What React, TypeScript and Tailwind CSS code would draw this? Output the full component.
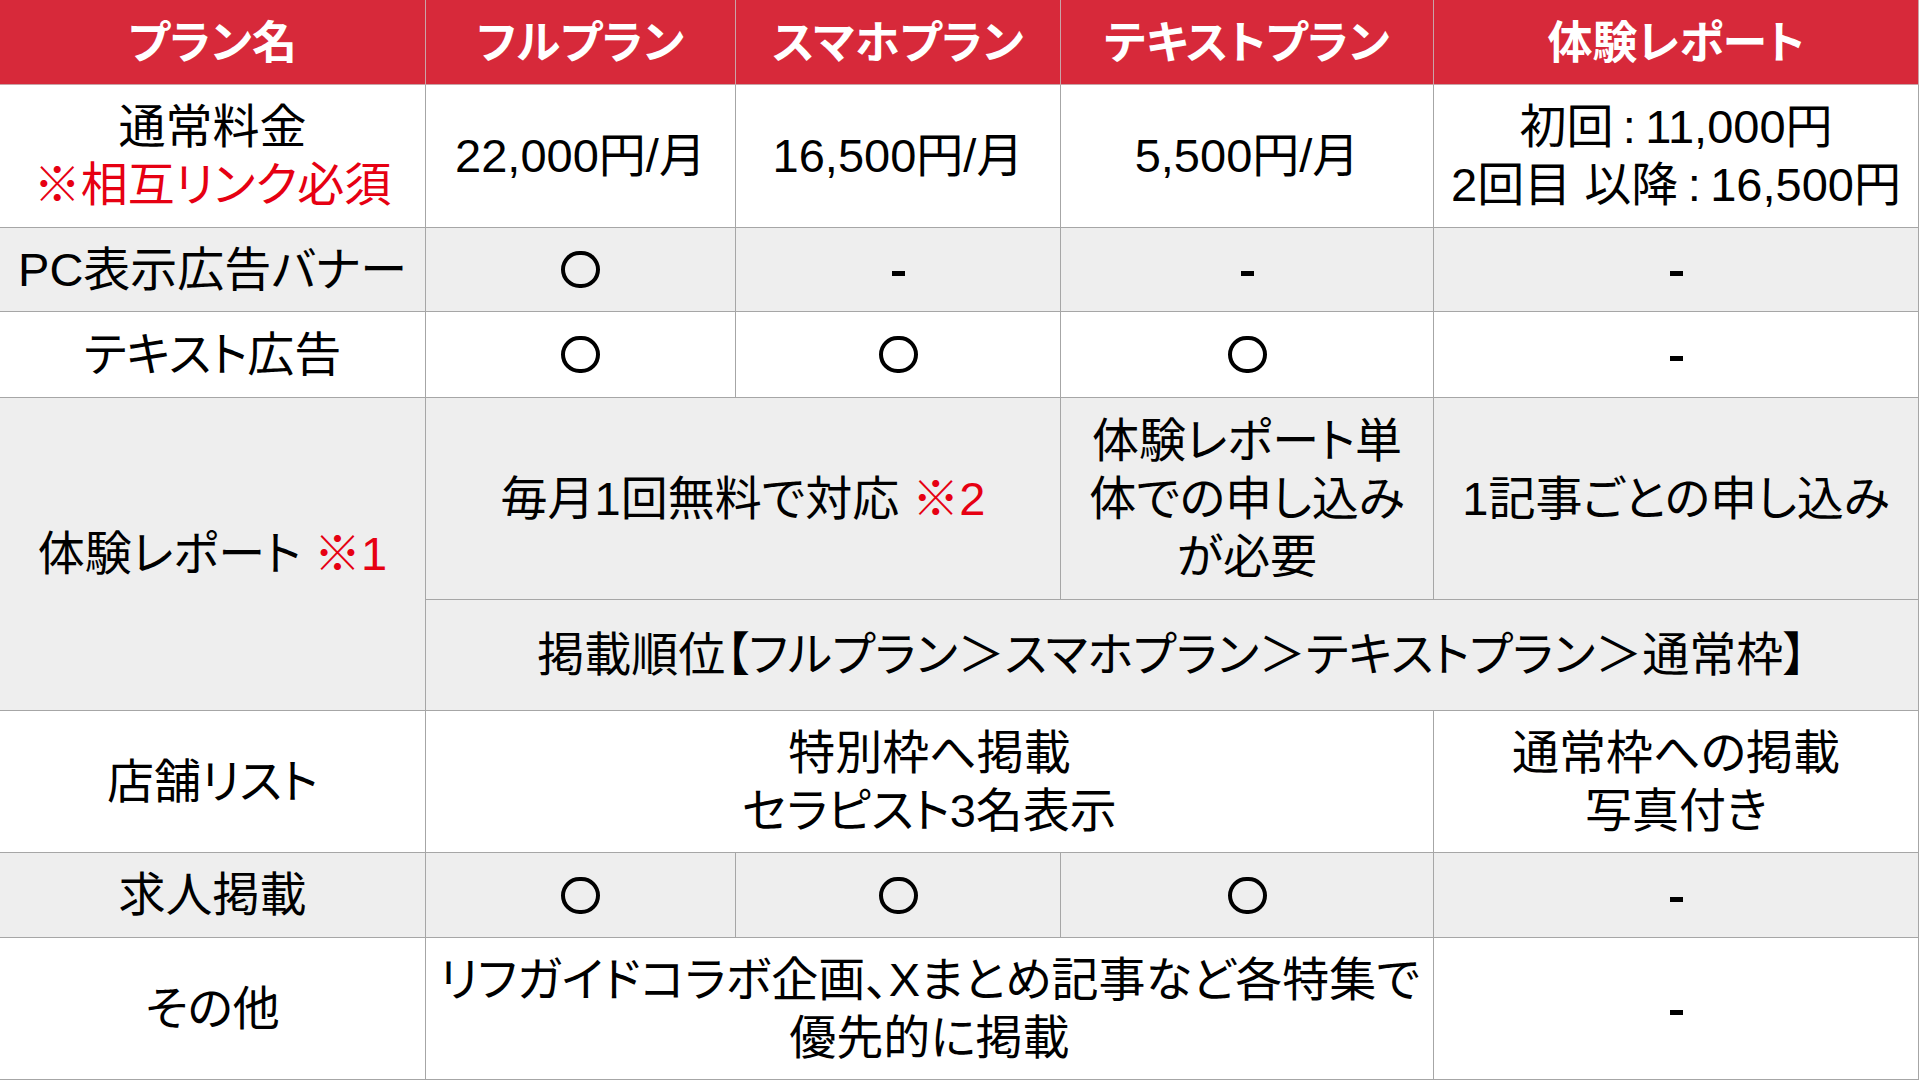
import React from 'react';

const font = "font-['Liberation_Sans','Noto_Sans_CJK_JP',sans-serif] [font-feature-settings:'palt']";
const line = 'border-r border-b border-[#a6a6a6]';

type CellProps = {
  className?: string;
  gray?: boolean;
  children: React.ReactNode;
};

const Cell: React.FC<CellProps> = ({ className = '', gray, children }) => (
  <div
    className={`flex items-center justify-center text-center text-[47px] leading-[58px] text-black whitespace-nowrap ${line} ${
      gray ? 'bg-[#eeeeee]' : 'bg-white'
    } ${className}`}
  >
    <div>{children}</div>
  </div>
);

const Head: React.FC<{ children: React.ReactNode }> = ({ children }) => (
  <div className="flex items-center justify-center pt-[4px] bg-[#d7293a] text-white text-[45px] font-bold border-r border-b border-[#c9a3a7]">
    {children}
  </div>
);

// thick outlined circle as in the sheet
const Maru = () => <div className="w-[39px] h-[37px] rounded-full border-[4px] border-black" />;
const Dash = () => <div className="w-[13px] h-[5px] bg-black mt-[8px]" />;
const Red: React.FC<{ children: React.ReactNode }> = ({ children }) => (
  <span className="text-[#e60012]">{children}</span>
);

export default function App() {
  return (
    <div
      className={`${font} w-[1919px] h-[1080px] overflow-hidden grid grid-cols-[426px_310px_325px_373px_485px] grid-rows-[85px_143px_84px_86px_202px_111px_142px_85px_142px] bg-white`}
    >
      {/* header */}
      <Head>プラン名</Head>
      <Head>フルプラン</Head>
      <Head>スマホプラン</Head>
      <Head>テキストプラン</Head>
      <Head>体験レポート</Head>

      {/* 通常料金 */}
      <Cell>
        通常料金
        <br />
        <Red>※相互リンク必須</Red>
      </Cell>
      <Cell>22,000円/月</Cell>
      <Cell>16,500円/月</Cell>
      <Cell>5,500円/月</Cell>
      <Cell>
        初回{'\u2009'}:{'\u2009'}11,000円
        <br />
        2回目 以降{'\u2009'}:{'\u2009'}16,500円
      </Cell>

      {/* PC表示広告バナー */}
      <Cell gray>PC表示広告バナー</Cell>
      <Cell gray>
        <Maru />
      </Cell>
      <Cell gray>
        <Dash />
      </Cell>
      <Cell gray>
        <Dash />
      </Cell>
      <Cell gray>
        <Dash />
      </Cell>

      {/* テキスト広告 */}
      <Cell>テキスト広告</Cell>
      <Cell>
        <Maru />
      </Cell>
      <Cell>
        <Maru />
      </Cell>
      <Cell>
        <Maru />
      </Cell>
      <Cell>
        <Dash />
      </Cell>

      {/* 体験レポート */}
      <Cell gray className="row-span-2">
        体験レポート <Red>※1</Red>
      </Cell>
      <Cell gray className="col-span-2">
        毎月1回無料で対応 <Red>※2</Red>
      </Cell>
      <Cell gray>
        体験レポート単
        <br />
        体での申し込み
        <br />
        が必要
      </Cell>
      <Cell gray>1記事ごとの申し込み</Cell>
      <Cell gray className="col-span-4">
        掲載順位【フルプラン＞スマホプラン＞テキストプラン＞通常枠】
      </Cell>

      {/* 店舗リスト */}
      <Cell>店舗リスト</Cell>
      <Cell className="col-span-3">
        特別枠へ掲載
        <br />
        セラピスト3名表示
      </Cell>
      <Cell>
        通常枠への掲載
        <br />
        写真付き
      </Cell>

      {/* 求人掲載 */}
      <Cell gray>求人掲載</Cell>
      <Cell gray>
        <Maru />
      </Cell>
      <Cell gray>
        <Maru />
      </Cell>
      <Cell gray>
        <Maru />
      </Cell>
      <Cell gray>
        <Dash />
      </Cell>

      {/* その他 */}
      <Cell>その他</Cell>
      <Cell className="col-span-3">
        リフガイドコラボ企画、Xまとめ記事など各特集で
        <br />
        優先的に掲載
      </Cell>
      <Cell>
        <Dash />
      </Cell>
    </div>
  );
}
